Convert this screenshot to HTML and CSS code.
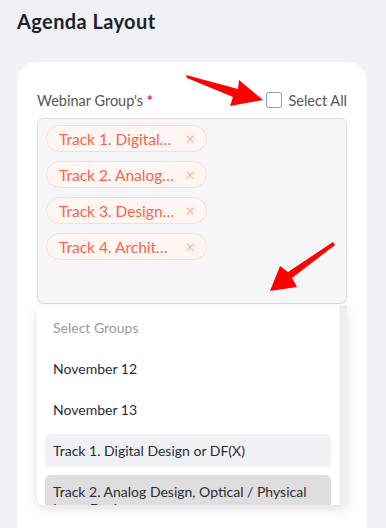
FILE: index.html
```html
<!DOCTYPE html>
<html lang="en">
<head>
  <meta charset="UTF-8" />
  <meta name="viewport" content="width=device-width, initial-scale=1.0"/>
  <title>Agenda Layout</title>
  <link rel="stylesheet" href="styles.css">
</head>
<body>

  <h1 class="title">Agenda Layout</h1>

  <div class="card">
    <div class="field-head">
      <label class="label">Webinar Group's <span class="req">*</span></label>
      <label class="select-all"><span class="check"></span>Select All</label>
    </div>

    <div class="tags">
      <span class="tag"><span class="tag-text">Track 1. Digital Design or DF(X)</span><span class="tag-x">&times;</span></span>
      <span class="tag"><span class="tag-text">Track 2. Analog Design, Optical / Physical Layer Design</span><span class="tag-x">&times;</span></span>
      <span class="tag"><span class="tag-text">Track 3. Design Verification</span><span class="tag-x">&times;</span></span>
      <span class="tag"><span class="tag-text">Track 4. Architecture</span><span class="tag-x">&times;</span></span>
    </div>

    <div class="dropdown">
      <ul class="options">
        <li class="option placeholder">Select Groups</li>
        <li class="option">November 12</li>
        <li class="option">November 13</li>
        <li class="option selected">Track 1. Digital Design or DF(X)</li>
        <li class="option active">Track 2. Analog Design, Optical / Physical Layer Design</li>
      </ul>
      <div class="scrollbar"></div>
    </div>

    <!-- annotation arrows -->
    <svg class="arrows" width="386" height="528" viewBox="0 0 386 528">
      <polygon fill="#ff0000" points="186,75 238,89 239,80 263,100 230,106 233,97 187,78" />
      <polygon fill="#ff0000" points="333,242 335,245 292,278 297,287 270,291 280,266 288,272" />
    </svg>
  </div>

</body>
</html>
```

FILE: styles.css
```css
body {
  margin: 0;
  padding: 0 19px 0 17px;
  background: #f0f1f5;
  font-family: "Lato", "Open Sans", sans-serif;
  color: #333;
}
.title {
  margin: 0;
  padding-top: 9px;
  height: 53px;
  font-size: 20px;
  letter-spacing: 0.4px;
  font-weight: 700;
  color: #1f1f2b;
  line-height: 24px;
}
.card {
  background: #fff;
  border-radius: 20px 20px 0 0;
  padding: 27px 20px 30px;
  min-height: 480px;
}
.field-head {
  display: flex;
  align-items: center;
  justify-content: space-between;
  height: 22px;
  margin-bottom: 7px;
}
.label {
  font-size: 14.5px;
  color: #555;
}
.req {
  color: #ee1c3a;
  font-weight: 700;
}
.select-all {
  display: flex;
  align-items: center;
  gap: 6px;
  font-size: 14.5px;
  color: #555;
}
.check {
  width: 14px;
  height: 14px;
  border: 1px solid #9a9a9a;
  border-radius: 3px;
  background: #fff;
}
.tags {
  height: 172px;
  background: #f6f6f8;
  border: 1px solid #dcdce1;
  border-radius: 6px;
  padding: 6px 8px;
  display: flex;
  flex-direction: column;
  align-items: flex-start;
  gap: 9px;
}
.tag {
  display: flex;
  align-items: center;
  box-sizing: border-box;
  width: 161px;
  height: 27px;
  padding: 0 11px 0 12px;
  border: 1px solid #fddcd0;
  border-radius: 14px;
  background: #fff5f2;
  color: #f3674a;
  font-size: 15.5px;
}
.tag-text {
  flex: 1;
  overflow: hidden;
  white-space: nowrap;
  text-overflow: ellipsis;
}
.tag-x {
  margin-left: 10px;
  color: #fcb4a3;
  font-size: 17px;
  line-height: 1;
}
.dropdown {
  display: flex;
  height: 200px;
  margin-top: 1px;
  background: #fff;
  border-radius: 6px 0 0 6px;
  box-shadow: 0 4px 12px rgba(0, 0, 0, 0.12);
  overflow: hidden;
}
.options {
  flex: 1;
  list-style: none;
  margin: 0;
  padding: 6px 8px 0;
}
.option {
  padding: 8px 8px;
  margin-bottom: 8px;
  border-radius: 5px;
  font-size: 14px;
  line-height: 17px;
  color: #2b2b33;
}
.placeholder {
  color: #9a9a9f;
}
.selected {
  background: #f0f1f5;
}
.active {
  background: #dedede;
}
.scrollbar {
  width: 8px;
  background: #efefef;
}
.arrows {
  position: absolute;
  left: 0;
  top: 0;
  pointer-events: none;
}
```
